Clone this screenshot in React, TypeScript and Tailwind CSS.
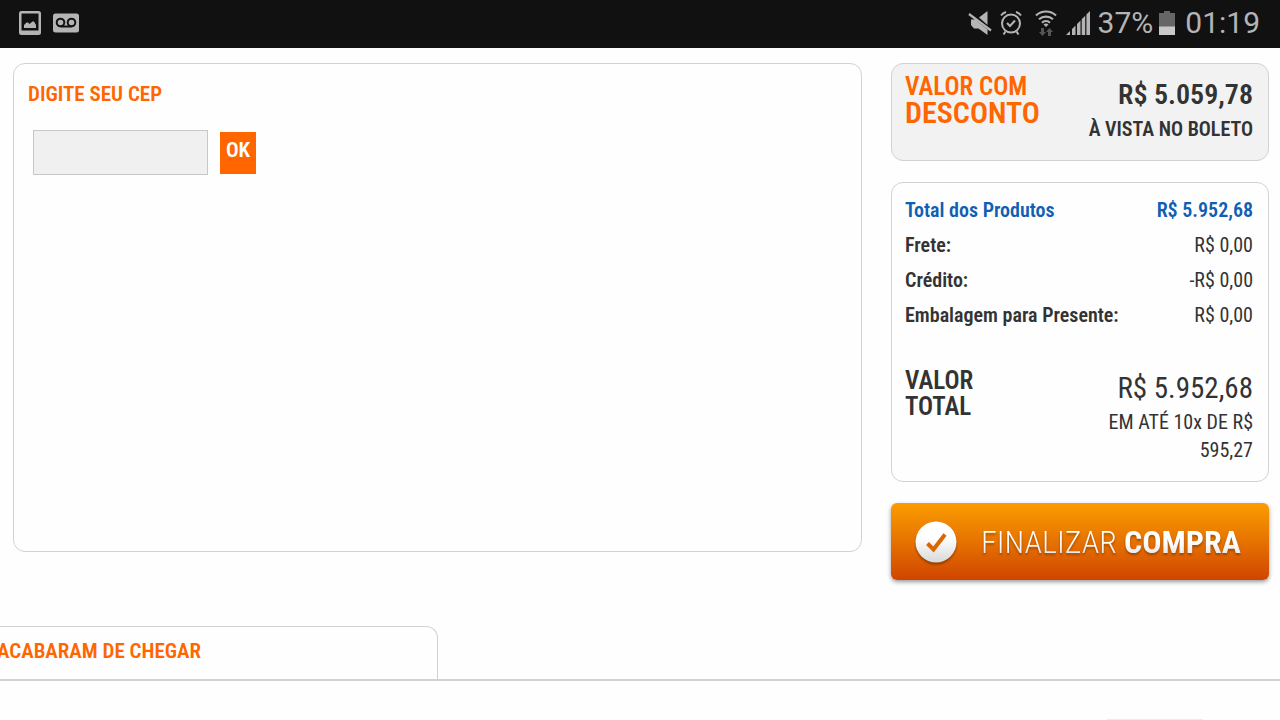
import { useState } from 'react';

const costs = [
  { label: 'Frete:', value: 'R$ 0,00' },
  { label: 'Crédito:', value: '-R$ 0,00' },
  { label: 'Embalagem para Presente:', value: 'R$ 0,00' },
];

const StatusBar = () => (
  <header className="flex h-12 items-center justify-between bg-[#111111] pr-5 pb-0.5 pl-[19px] font-['Roboto',sans-serif] text-[#b4b4b4]">
    <div className="flex items-center gap-3">
      {/* screenshot */}
      <svg width="22" height="24" viewBox="0 0 22 24" fill="currentColor">
        <path fillRule="evenodd" d="M2.500 0h17a2.500 2.500 0 0 1 2.500 2.500v19a2.500 2.500 0 0 1-2.500 2.500h-17a2.500 2.500 0 0 1-2.500-2.500v-19a2.500 2.500 0 0 1 2.500-2.500zM2.500 2.500v17h17v-17z" />
        <path d="M5 17v-3l2.500-2.500h1.500l1.500 1.500 3-2.500h1.500l2 3.500v3z" />
      </svg>
      {/* voicemail */}
      <svg width="26" height="20" viewBox="0 0 26 20">
        <rect width="26" height="19" y="0.500" rx="2.500" fill="currentColor" />
        <g fill="none" stroke="#111111" strokeWidth="2">
          <circle cx="7.500" cy="9.500" r="3.800" />
          <circle cx="18.500" cy="9.500" r="3.800" />
          <path d="M7.500 13.500h11" />
        </g>
      </svg>
    </div>
    <div className="flex items-center">
      {/* muted */}
      <svg width="24" height="26" viewBox="0 0 24 26" fill="currentColor">
        <path d="M11 7.500 19.500 1v14zM3 9.500h4l12.500 10v5.500l-9-6.500H6L3 15z" />
        <path d="M1 4l22 16.500" stroke="currentColor" strokeWidth="2.200" fill="none" />
      </svg>
      {/* alarm */}
      <svg className="ml-2" width="22" height="26" viewBox="0 0 22 26" fill="none" stroke="currentColor" strokeWidth="2">
        <circle cx="11" cy="13.500" r="9" />
        <path d="M7 13l3 3 5-5.500M1 5.500a9 9 0 0 1 5-3.500M21 5.500a9 9 0 0 0-5-3.500M5.500 21.500l-2 3M16.500 21.500l2 3" />
      </svg>
      {/* wifi with traffic arrows */}
      <svg className="ml-3" width="24" height="26" viewBox="0 0 24 26">
        <g fill="none" stroke="currentColor" strokeWidth="2.200">
          <path d="M2 5.500a14.500 14.500 0 0 1 20 0M5 9.200a10.500 10.500 0 0 1 14 0M8 12.700a6 6 0 0 1 8 0" />
        </g>
        <path d="M9.500 14.500a4 4 0 0 1 5 0L12 17z" fill="currentColor" />
        <path d="M7 18h3v4h2l-3.500 4L5 22h2zM14 26h3v-4h2l-3.500-4-3.500 4h2z" fill="#555555" />
      </svg>
      {/* signal */}
      <svg className="ml-2" width="24" height="24" viewBox="0 0 24 24" fill="currentColor">
        <path d="M0 24l4-4v4zM6 18l3.500-3.500v9.500h-3.500zM11 13l3.500-3.500v14.500h-3.500zM15.700 8.300l3.500-3.500v19.200h-3.500zM20.400 3.600l3.600-3.600v24h-3.600z" />
      </svg>
      <span className="ml-2 text-[30px] leading-none">37%</span>
      {/* battery */}
      <svg className="ml-1.5" width="16" height="24" viewBox="0 0 16 24">
        <path d="M0 2h5V0h6v2h5v14H0z" fill="#666666" />
        <path d="M0 15.500h16v8.500H0z" fill="#c8c8c8" />
      </svg>
      <span className="ml-2.5 text-[30px] leading-none">01:19</span>
    </div>
  </header>
);

const ZipCode = () => {
  const [cep, setCep] = useState('');

  return (
    <form
      onSubmit={(e) => e.preventDefault()}
      className="min-h-[489px] flex-1 rounded-xl border border-[#d2d2d2] px-3.5 pt-4"
    >
      <label htmlFor="cep" className="block text-[21px] leading-7 font-semibold text-[#ff6600]">
        DIGITE SEU CEP
      </label>
      <div className="mt-[22px] flex items-center gap-3 pl-[5px]">
        <input
          id="cep"
          value={cep}
          onChange={(e) => setCep(e.target.value)}
          className="h-[45px] w-[175px] border border-[#c8c8c8] bg-[#f0f0f0] px-2 text-[21px]"
        />
        <button className="h-[42px] w-9 bg-[#ff6600] pb-1 text-[21px] font-semibold text-white">OK</button>
      </div>
    </form>
  );
};

const Discount = () => (
  <section className="flex min-h-[98px] justify-between rounded-xl border border-[#d2d2d2] bg-[#f2f2f2] pt-2.5 pr-[15px] pl-[13px]">
    <h2 className="text-[25px] leading-[26px] font-semibold text-[#ff6600]">
      VALOR COM
      <span className="block text-[30px]">DESCONTO</span>
    </h2>
    <p className="pt-[3px] text-right text-[20px] leading-8 font-semibold">
      <span className="block text-[28px] leading-9">R$ 5.059,78</span>À VISTA NO BOLETO
    </p>
  </section>
);

const Totals = () => (
  <section className="min-h-[300px] rounded-xl border border-[#d2d2d2] pt-2.5 pr-[15px] pl-[13px]">
    <table className="w-full text-[20px] leading-[35px]">
      <tbody>
        <tr className="text-[#0f5fb4]">
          <th className="text-left font-semibold">Total dos Produtos</th>
          <td className="text-right font-semibold">R$ 5.952,68</td>
        </tr>
        {costs.map((cost) => (
          <tr key={cost.label}>
            <th className="text-left font-semibold">{cost.label}</th>
            <td className="text-right">{cost.value}</td>
          </tr>
        ))}
      </tbody>
    </table>
    <div className="mt-[35px] flex justify-between">
      <h2 className="text-[25px] leading-[26px] font-semibold">
        VALOR
        <br />
        TOTAL
      </h2>
      <p className="w-[150px] text-right text-[20px] leading-7">
        <span className="block text-[29px] leading-10">R$ 5.952,68</span>
        EM ATÉ 10x DE R$ 595,27
      </p>
    </div>
  </section>
);

const CheckoutButton = () => (
  <button className="flex h-[77px] items-center rounded-md bg-linear-to-b from-[#fb9d00] to-[#d04400] pl-6 whitespace-nowrap shadow-[0_2px_4px_rgba(0,0,0,0.4)]">
    <svg className="drop-shadow-[0_2px_1px_rgba(0,0,0,0.35)]" width="42" height="42" viewBox="0 0 42 42">
      <defs>
        <linearGradient id="disc" x1="0" y1="0" x2="0" y2="1">
          <stop offset="0.400" stopColor="#ffffff" />
          <stop offset="1" stopColor="#d8d8d8" />
        </linearGradient>
      </defs>
      <circle cx="21" cy="21" r="20.500" fill="url(#disc)" />
      <path d="M12.500 22.500l6 6 11.500-15" fill="none" stroke="#d96600" strokeWidth="4" />
    </svg>
    <span className="ml-6 bg-linear-to-b from-white from-50% to-[#d8d8d8] bg-clip-text text-[32px] leading-10 font-light text-transparent drop-shadow-[0_2px_1px_rgba(0,0,0,0.3)]">
      FINALIZAR <b className="font-bold">COMPRA</b>
    </span>
  </button>
);

const App = () => (
  <div className="overflow-hidden bg-[#fefefe] font-['Roboto_Condensed','Liberation_Sans_Narrow','Arial_Narrow',sans-serif] text-[#333333]">
    <StatusBar />
    <main className="flex items-start gap-[29px] pt-[15px] pr-[11px] pl-[13px]">
      <ZipCode />
      <aside className="flex w-[378px] flex-col gap-[21px]">
        <Discount />
        <Totals />
        <CheckoutButton />
      </aside>
    </main>
    <section className="mt-[46px]">
      <div className="border-b-2 border-[#d2d2d2]">
        <h2 className="h-[53px] w-[438px] rounded-tr-xl border-t border-r border-[#d2d2d2] pt-2.5 text-[21px] leading-7 font-semibold text-[#ff6600]">
          <span className="-ml-[3px]">ACABARAM DE CHEGAR</span>
        </h2>
      </div>
      <div className="flex justify-end pt-[38px] pr-[77px]">
        <div className="h-px w-24 bg-[#ddf5dd]" />
      </div>
    </section>
  </div>
);

export default App;
